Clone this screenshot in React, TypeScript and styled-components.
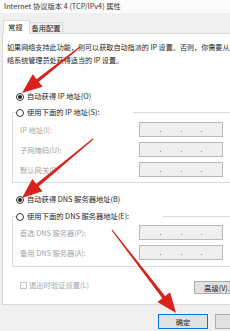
import React from "react";
import styled, { createGlobalStyle } from "styled-components";

const Global = createGlobalStyle`
  html, body {
    margin: 0;
    padding: 0;
    width: 230px;
    height: 331px;
    overflow: hidden;
    background: #f0f0f0;
  }
  body {
    font-family: "Noto Sans CJK SC", "Noto Sans", sans-serif;
  }
  * { box-sizing: border-box; }
`;

const Frame = styled.div`
  position: relative;
  width: 230px;
  height: 331px;
  overflow: hidden;
`;

const Dialog = styled.div`
  width: 272px;
  height: 331px;
  display: flex;
  flex-direction: column;
  background: #f0f0f0;
  font-size: 7.3px;
  color: #222;
`;

const TitleBar = styled.div`
  height: 13px;
  line-height: 13px;
  background: #fbfbfb;
  padding-left: 4px;
  white-space: nowrap;
  color: #333;
`;

const TabStrip = styled.div`
  height: 20px;
  display: flex;
  align-items: flex-end;
  padding-left: 3px;
`;

const Tab = styled.div<{ $active?: boolean }>`
  position: relative;
  white-space: nowrap;
  border: 1px solid #d9d9d9;
  border-bottom: none;
  ${(p) =>
    p.$active
      ? `
    z-index: 1;
    width: 27px;
    height: 14px;
    line-height: 13px;
    margin-bottom: -1px;
    padding-left: 4px;
    background: #fff;
  `
      : `
    width: 33px;
    height: 11px;
    line-height: 10px;
    border-left: none;
    text-align: center;
    background: #f0f0f0;
  `}
`;

const Panel = styled.div`
  margin: 0 2px;
  height: 272px;
  border: 1px solid #d9d9d9;
  background: #fff;
  padding: 7px 0 0 4px;
  display: flex;
  flex-direction: column;
`;

const Paragraph = styled.div`
  font-size: 7.1px;
  line-height: 13px;
  white-space: nowrap;
`;

const RadioRow = styled.div<{ $top: number }>`
  display: flex;
  align-items: center;
  gap: 3px;
  height: 13px;
  line-height: 13px;
  margin: ${(p) => p.$top}px 0 0 9px;
  white-space: nowrap;
`;

const Radio = styled.span<{ $checked?: boolean }>`
  flex: none;
  width: 8px;
  height: 8px;
  border: 1px solid #333;
  border-radius: 50%;
  background: #fff;
  display: flex;
  align-items: center;
  justify-content: center;
  &::after {
    content: "";
    display: ${(p) => (p.$checked ? "block" : "none")};
    width: 4px;
    height: 4px;
    border-radius: 50%;
    background: #222;
  }
`;

const Group = styled.fieldset<{ $top: number; $padTop: number; $padBottom: number }>`
  width: 232px;
  min-width: 0;
  margin: ${(p) => p.$top}px 0 0 5px;
  padding: ${(p) => p.$padTop}px 0 ${(p) => p.$padBottom}px 3px;
  border: 1px solid #dcdcdc;
`;

const Legend = styled.legend`
  padding: 0 34px 0 0;
  height: 13px;
`;

const LegendInner = styled.span`
  display: flex;
  align-items: center;
  gap: 3px;
  height: 13px;
  line-height: 13px;
  white-space: nowrap;
`;

const Rows = styled.div`
  display: flex;
  flex-direction: column;
  gap: 5px;
`;

const FieldRow = styled.div`
  display: grid;
  grid-template-columns: 119px 84px;
  align-items: center;
  height: 15px;
  margin-left: 4px;
  color: #a3a3a3;
  white-space: nowrap;
`;

const IpBox = styled.div`
  height: 15px;
  border: 1px solid #b9b9b9;
  background: #efefef;
  display: flex;
  align-items: center;
  justify-content: space-evenly;
`;

const Dot = styled.span`
  width: 1px;
  height: 1px;
  background: #8a8a8a;
  transform: translateY(2px);
`;

const BottomRow = styled.div`
  display: flex;
  justify-content: space-between;
  align-items: flex-start;
  width: 224px;
  height: 15px;
  margin: 12px 0 0 13px;
`;

const CheckLabel = styled.div`
  display: flex;
  align-items: center;
  gap: 2px;
  height: 13px;
  line-height: 13px;
  color: #a8a8a8;
  white-space: nowrap;
`;

const CheckBox = styled.span`
  width: 7px;
  height: 7px;
  border: 1px solid #c4c4c4;
  background: #fff;
`;

const Button = styled.button<{ $primary?: boolean; $h?: number; $mt?: number }>`
  flex: none;
  width: 50px;
  height: ${(p) => p.$h ?? 15}px;
  margin-top: ${(p) => p.$mt ?? 0}px;
  padding: 0;
  font: inherit;
  color: #222;
  background: #e1e1e1;
  border: 1px solid ${(p) => (p.$primary ? "#0078d7" : "#adadad")};
  display: flex;
  align-items: center;
  justify-content: center;
  white-space: nowrap;
`;

const ButtonBar = styled.div`
  display: flex;
  justify-content: flex-end;
  gap: 7px;
  padding: 9px 7px 0 0;
`;

const Overlay = styled.svg`
  position: absolute;
  left: 0;
  top: 0;
  width: 230px;
  height: 331px;
  pointer-events: none;
`;

type Pt = [number, number];

function arrowShapes(start: Pt, tip: Pt, headLen = 20, headHalf = 8, tailW = 1.2, shaftW = 3.6) {
  const dx = tip[0] - start[0];
  const dy = tip[1] - start[1];
  const len = Math.hypot(dx, dy);
  const ux = dx / len;
  const uy = dy / len;
  const nx = -uy;
  const ny = ux;
  const bx = tip[0] - headLen * ux;
  const by = tip[1] - headLen * uy;
  const ox = bx + 3 * ux;
  const oy = by + 3 * uy;
  const f = (n: number) => n.toFixed(2);
  const shaft = [
    [start[0] + nx * tailW / 2, start[1] + ny * tailW / 2],
    [ox + nx * shaftW / 2, oy + ny * shaftW / 2],
    [ox - nx * shaftW / 2, oy - ny * shaftW / 2],
    [start[0] - nx * tailW / 2, start[1] - ny * tailW / 2],
  ]
    .map((p) => `${f(p[0])},${f(p[1])}`)
    .join(" ");
  const head = [
    [tip[0], tip[1]],
    [bx + nx * headHalf, by + ny * headHalf],
    [bx - nx * headHalf, by - ny * headHalf],
  ]
    .map((p) => `${f(p[0])},${f(p[1])}`)
    .join(" ");
  return { shaft, head };
}

const Arrow: React.FC<{ start: Pt; tip: Pt }> = ({ start, tip }) => {
  const { shaft, head } = arrowShapes(start, tip);
  return (
    <g fill="#d8231c">
      <polygon points={shaft} />
      <polygon points={head} />
    </g>
  );
};

const IpField: React.FC<{ label: string }> = ({ label }) => (
  <FieldRow>
    <span>{label}</span>
    <IpBox>
      <Dot />
      <Dot />
      <Dot />
    </IpBox>
  </FieldRow>
);

export default function App() {
  return (
    <Frame>
      <Global />
      <Dialog>
        <TitleBar>Internet 协议版本 4 (TCP/IPv4) 属性</TitleBar>
        <TabStrip>
          <Tab $active>常规</Tab>
          <Tab>备用配置</Tab>
        </TabStrip>
        <Panel>
          <Paragraph>
            如果网络支持此功能，则可以获取自动指派的 IP 设置。否则，你需要从网
            <br />
            络系统管理员处获得适当的 IP 设置。
          </Paragraph>

          <RadioRow $top={23}>
            <Radio $checked />
            <span>自动获得 IP 地址(O)</span>
          </RadioRow>

          <Group $top={3} $padTop={3} $padBottom={5}>
            <Legend>
              <LegendInner>
                <Radio />
                <span>使用下面的 IP 地址(S):</span>
              </LegendInner>
            </Legend>
            <Rows>
              <IpField label="IP 地址(I):" />
              <IpField label="子网掩码(U):" />
              <IpField label="默认网关(D):" />
            </Rows>
          </Group>

          <RadioRow $top={10}>
            <Radio $checked />
            <span>自动获得 DNS 服务器地址(B)</span>
          </RadioRow>

          <Group $top={4} $padTop={2} $padBottom={6}>
            <Legend>
              <LegendInner>
                <Radio />
                <span>使用下面的 DNS 服务器地址(E):</span>
              </LegendInner>
            </Legend>
            <Rows>
              <IpField label="首选 DNS 服务器(P):" />
              <IpField label="备用 DNS 服务器(A):" />
            </Rows>
          </Group>

          <BottomRow>
            <CheckLabel>
              <CheckBox />
              <span>退出时验证设置(L)</span>
            </CheckLabel>
            <Button $h={13} $mt={2}>高级(V)...</Button>
          </BottomRow>
        </Panel>
        <ButtonBar>
          <Button $primary>确定</Button>
          <Button>取消</Button>
        </ButtonBar>
      </Dialog>
      <Overlay viewBox="0 0 230 331">
        <Arrow start={[80, 47]} tip={[22, 93]} />
        <Arrow start={[93, 139]} tip={[22, 198]} />
        <Arrow start={[112, 230]} tip={[176, 313]} />
      </Overlay>
    </Frame>
  );
}
